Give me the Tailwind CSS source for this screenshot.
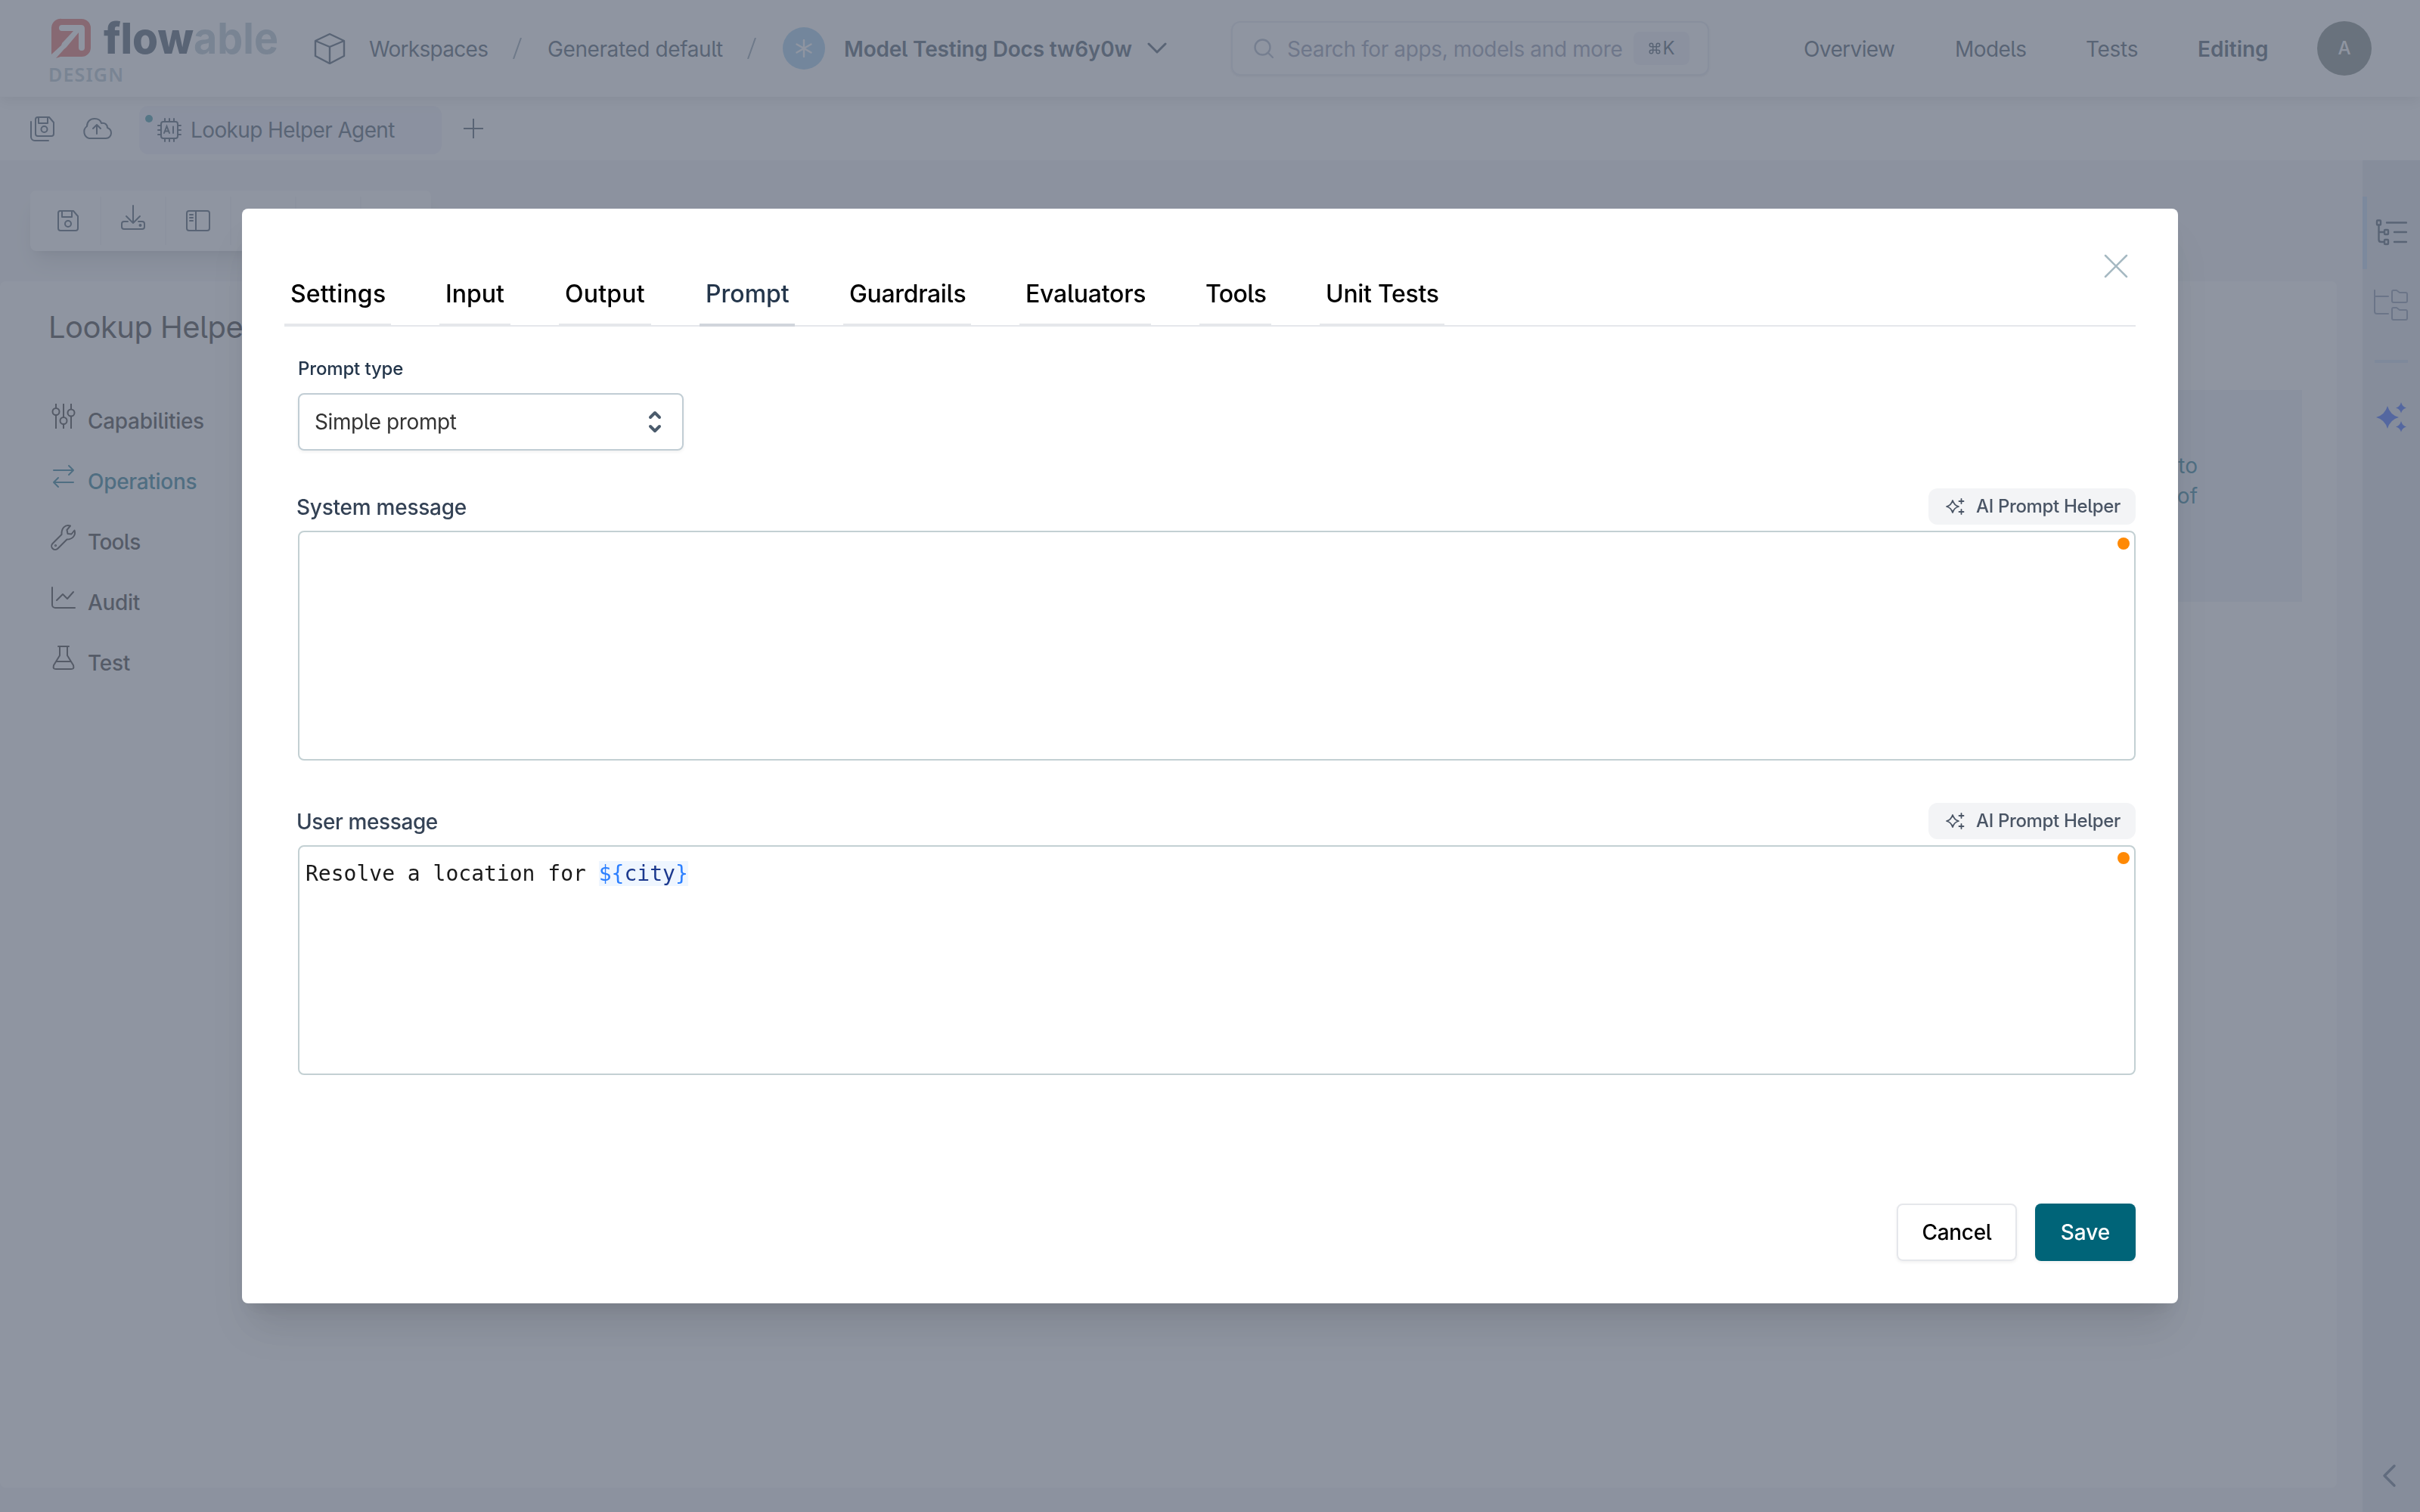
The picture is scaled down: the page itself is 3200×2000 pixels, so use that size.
<!DOCTYPE html>
<html lang="en">
<head>
    <meta charset="UTF-8">
    <meta name="viewport" content="width=device-width, initial-scale=1.0">
    <title>Flowable Design - Lookup Helper Agent</title>
    <script src="https://cdn.jsdelivr.net/npm/@tailwindcss/browser@4"></script>
</head>
<body class="w-[3200px] h-[2000px] overflow-hidden bg-gray-100 font-['Inter',sans-serif] text-[28px] leading-[40px] text-[#2a3e52] whitespace-nowrap [font-feature-settings:'cv05']">
    <div class="flex flex-col h-[2000px]">
        <!-- Top navigation -->
        <header class="relative z-10 flex items-center h-32 shrink-0 bg-white shadow-[0_6px_16px_rgba(0,0,0,0.12)] pl-[66px]">
            <svg class="w-[304px] h-[100px] mt-3 overflow-visible" viewBox="66 20 304 100">
                <path d="M82 25h26a12 12 0 0 1 12 12v26a12 12 0 0 1-12 12H80l-6 2 9-10c2-3 4-3 6-6l15-18v20q0 4 4 4t4-4V38q0-5-5-5H82q-4 0-4 4t4 4h15L84 55q-2 1-3 5L68 72V37a12 12 0 0 1 14-12z" fill="#e0514a"/>
                <text x="137" y="71" font-size="57" font-weight="800" textLength="119" lengthAdjust="spacingAndGlyphs" fill="#2a3e52" style="font-feature-settings:normal">flow</text>
                <text x="256" y="71" font-size="57" font-weight="700" textLength="112" lengthAdjust="spacingAndGlyphs" fill="#a6bac8" style="font-feature-settings:normal">able</text>
                <text x="64" y="108" font-size="25" font-weight="600" textLength="99" font-family="Noto Sans" fill="#a9bcc8">DESIGN</text>
            </svg>
            <svg class="w-[42px] h-[42px] ml-[45px]" viewBox="0 0 42 42" fill="none" stroke="currentColor" stroke-width="2.4" stroke-linejoin="round"><path d="M21 2l19 9v20l-19 10L2 31V11zM2 11l19 8 19-8M21 19v22"/></svg>
            <span class="mt-px ml-[31px] w-[156px] tracking-[-0.7px]">Workspaces</span>
            <svg class="w-3 h-7 ml-[34px]" viewBox="0 0 12 28" stroke="#7b8fa0" stroke-width="2"><path d="M11 0L1 28"/></svg>
            <span class="mt-px ml-[34px] w-[230px] tracking-[-0.4px]">Generated default</span>
            <svg class="w-3 h-7 ml-[34px]" viewBox="0 0 12 28" stroke="#7b8fa0" stroke-width="2"><path d="M11 0L1 28"/></svg>
            <span class="ml-[35px] w-14 h-14 rounded-full bg-[#8fc4ea] flex items-center justify-center">
                <svg class="w-6 h-6" viewBox="0 0 24 24" stroke="#fff" stroke-width="2.4" stroke-linecap="round"><path d="M12 1v22M2.500 6.500l19 11M2.500 17.500l19-11"/></svg>
            </span>
            <span class="mt-px ml-[25px] w-[379px] font-semibold tracking-[-0.2px]">Model Testing Docs tw6y0w</span>
            <svg class="w-[26px] h-4 ml-[22px]" viewBox="0 0 26 16" fill="none" stroke="currentColor" stroke-width="3" stroke-linecap="round" stroke-linejoin="round"><path d="M2 2l11 11L24 2"/></svg>
            <div class="ml-[85px] w-[632px] h-[72px] rounded-xl border-2 border-[#e2e5f0] shadow-sm flex items-center pl-7">
                <svg class="w-[26px] h-[26px]" viewBox="0 0 26 26" fill="none" stroke="#9aa6bb" stroke-width="2.4" stroke-linecap="round"><circle cx="11.500" cy="11.500" r="10"/><path d="M19 19l6 6"/></svg>
                <span class="mt-px ml-[18px] w-[441px] text-[#7e86a2] [font-feature-settings:normal] tracking-[-0.38px]">Search for apps, models and more</span>
                <span class="ml-[17px] w-[74px] h-11 rounded-lg bg-[#eef0f7] text-[24px] flex items-center justify-center"><svg class="w-[18px] h-[18px] mr-px" viewBox="0 0 24 24" fill="none" stroke="currentColor" stroke-width="2"><path d="M15 6v12a3 3 0 1 0 3-3H6a3 3 0 1 0 3 3V6a3 3 0 1 0-3 3h12a3 3 0 1 0-3-3"/></svg>K</span>
            </div>
            <nav class="flex items-center mt-px ml-[125px]">
                <span class="w-[200px] tracking-[-0.6px]">Overview</span>
                <span class="w-[173px] tracking-[-0.6px]">Models</span>
                <span class="w-[148px] tracking-[-0.3px]">Tests</span>
                <span class="w-[92px] font-semibold">Editing</span>
            </nav>
            <span class="ml-[66px] w-[72px] h-[72px] rounded-full bg-[#67746f] text-white text-[24px] font-medium flex items-center justify-center">A</span>
        </header>

        <!-- Open model tabs -->
        <div class="flex items-center h-[84px] shrink-0 bg-white pl-10">
            <svg class="w-8 h-[34px]" viewBox="0 0 32 34" fill="none" stroke="currentColor" stroke-width="2" stroke-linejoin="round" stroke-linecap="round"><path d="M11 2h14l6 7v15a3 3 0 0 1-3 3H10a3 3 0 0 1-3-3V5a3 3 0 0 1 3-3zM11 2v8h12V2M1 8v20a5 5 0 0 0 5 5h18"/><circle cx="18.500" cy="18" r="4"/></svg>
            <svg class="w-10 h-[30px] ml-9" viewBox="0 0 40 30" fill="none" stroke="currentColor" stroke-width="2" stroke-linecap="round" stroke-linejoin="round"><path d="M10 28a9 9 0 0 1-3-16C7 6 11 2 17 2c5 0 8 2 9 6 5-1 8 2 8 6 3 1 5 4 5 7 0 4-3 7-7 7zM20 22V10M15 15l5-5 5 5"/></svg>
            <div class="relative mt-1 ml-9 w-[400px] h-16 rounded-xl bg-[#eff0f9] flex items-center pl-6">
                <span class="absolute left-2 top-3 w-[10px] h-[10px] rounded-full bg-[#1a8595]"></span>
                <svg class="w-8 h-8" viewBox="0 0 32 32" fill="none" stroke="currentColor" stroke-width="2" stroke-linecap="round"><rect x="5" y="5" width="22" height="22" rx="3"/><path d="M10 1v4M16 1v4M22 1v4M10 27v4M16 27v4M22 27v4M1 10h4M1 16h4M1 22h4M27 10h4M27 16h4M27 22h4M9 20l3.500-9 3.500 9M10.500 17.500h4.500M21 11.500V20"/></svg>
                <span class="ml-3 w-[269px] tracking-[-0.62px]">Lookup Helper Agent</span>
            </div>
            <svg class="w-[26px] h-[26px] ml-[29px]" viewBox="0 0 26 26" stroke="currentColor" stroke-width="2"><path d="M13 0v26M0 13h26"/></svg>
        </div>

        <div class="flex flex-1 min-h-0">
            <main class="flex flex-col w-[3124px] pt-10 pb-8">
                <!-- Toolbar -->
                <div class="ml-10 w-[530px] h-20 shrink-0 rounded-lg bg-white shadow-[0_20px_30px_-6px_rgba(0,0,0,0.14),0_8px_12px_-8px_rgba(0,0,0,0.14)] flex items-center divide-x-2 divide-gray-100">
                    <div class="w-[94px] h-16 pl-[35px] flex items-center"><svg class="w-[30px] h-[30px]" viewBox="0 0 30 30" fill="none" stroke="currentColor" stroke-width="2" stroke-linejoin="round"><path d="M4 2h18l6 7v16a3 3 0 0 1-3 3H5a3 3 0 0 1-3-3V5a3 3 0 0 1 2-3zM7 2v8h13V2"/><circle cx="15" cy="19" r="4"/></svg></div>
                    <div class="w-[86px] h-16 pl-[26px] flex items-center"><svg class="w-8 h-[34px] -mt-2" viewBox="0 0 32 34" fill="none" stroke="currentColor" stroke-width="2" stroke-linecap="round" stroke-linejoin="round"><path d="M16 1v23M7 15l9 9 9-9M9 22H4a3 3 0 0 0-3 3v4a3 3 0 0 0 3 3h24a3 3 0 0 0 3-3v-4a3 3 0 0 0-3-3h-5"/><circle cx="25.500" cy="27" r="1"/></svg></div>
                    <div class="w-[86px] h-16 pl-[26px] flex items-center"><svg class="w-8 h-[30px]" viewBox="0 0 32 30" fill="none" stroke="currentColor" stroke-width="2" stroke-linecap="round"><rect x="1" y="2" width="30" height="26" rx="3"/><path d="M13 2v26M5 7h4M5 11h4M5 15h4"/></svg></div>
                    <div class="w-[86px] h-16"></div>
                    <div class="w-[86px] h-16"></div>
                    <div class="w-[86px] h-16"></div>
                </div>

                <!-- Agent editor -->
                <section class="flex justify-between mt-10 flex-1 w-[3090px] bg-white rounded-lg text-[#18181b] font-medium">
                    <div class="pl-16">
                        <h1 class="mt-[37px] text-[40px] leading-[48px] font-normal tracking-[-0.55px]">Lookup Helper Agent</h1>
                        <ul class="mt-20 flex flex-col tracking-[-0.3px]">
                            <li class="h-20 flex"><svg class="w-10 h-10 -mt-1.5 mr-3" viewBox="0 0 40 40" fill="none" stroke="currentColor" stroke-width="2"><path d="M10 3v6M10 18v18M20 3v18M20 30v6M30 3v8M30 19v17"/><circle cx="10" cy="13.500" r="4.500"/><circle cx="20" cy="25.500" r="4.500"/><circle cx="30" cy="15" r="4.500"/></svg><span>Capabilities</span></li>
                            <li class="h-20 flex text-[#006482]"><svg class="w-10 h-10 -mt-1.5 mr-3" viewBox="0 0 40 40" fill="none" stroke="currentColor" stroke-width="2" stroke-linecap="round" stroke-linejoin="round"><path d="M7 11h26M27 5l6 6-6 6M33 27H7M13 21l-6 6 6 6"/></svg><span>Operations</span></li>
                            <li class="h-20 flex"><svg class="w-10 h-10 -mt-1.5 mr-3" viewBox="0 0 40 40" fill="none" stroke="currentColor" stroke-width="2" stroke-linejoin="round"><path d="M29 4.500l-4.500 5.500 1 5 5 .5 4-5c2 6-2 12-10 12l-12 12a4.500 4.500 0 0 1-7-6.500l12-12C17 8 22 2 29 4.500z"/><circle cx="9.500" cy="30.500" r=".6"/></svg><span class="tracking-[-0.7px]">Tools</span></li>
                            <li class="h-20 flex"><svg class="w-10 h-10 -mt-1.5 mr-3" viewBox="0 0 40 40" fill="none" stroke="currentColor" stroke-width="2" stroke-linecap="round" stroke-linejoin="round"><path d="M5 6v23a4 4 0 0 0 4 4h26M11 23l8-8 6 6 8-9"/></svg><span>Audit</span></li>
                            <li class="h-20 flex"><svg class="w-10 h-10 -mt-1.5 mr-3" viewBox="0 0 40 40" fill="none" stroke="currentColor" stroke-width="2" stroke-linecap="round" stroke-linejoin="round"><path d="M13 4h14M15 4v12L7 29c-1 4 0 5 3 5h20c3 0 4-1 3-5l-8-13V4M10 24h20"/></svg><span>Test</span></li>
                        </ul>
                    </div>
                    <div class="mt-36 mr-[46px] w-[700px] h-[280px] bg-[#ebedf6] text-[#006482] font-normal text-right pt-20 pr-[138px]">
                        <p>to</p>
                        <p>of</p>
                    </div>
                </section>
            </main>

            <!-- Right rail -->
            <aside class="flex flex-col items-center w-[76px] bg-[#dbdfe8] pt-12 pb-8">
                <div class="w-full h-24 border-l-6 border-[#b4d0f0] pl-[11px] flex items-center">
                    <svg class="w-[42px] h-9" viewBox="0 0 42 36" fill="none" stroke="currentColor" stroke-width="2.400" stroke-linecap="round"><rect x="2" y="1.500" width="5" height="6" rx="1"/><rect x="12" y="14" width="5" height="6" rx="1"/><rect x="12" y="27" width="5" height="6" rx="1"/><path d="M15 4.500h26M25 17h16M25 30h16M4.500 8v19q0 3 3 3H12M4.500 17H12"/></svg>
                </div>
                <svg class="w-[46px] h-[42px] mt-[27px] text-[#72819a]" viewBox="0 0 46 42" fill="none" stroke="currentColor" stroke-width="2" stroke-linecap="round" stroke-linejoin="round"><path d="M1 1v28q0 3 3 3h15M2 9h17M24 3q0-2 2-2h4l4 3h8q2 0 2 2v9q0 2-2 2H26q-2 0-2-2zM24 26q0-2 2-2h4l4 3h8q2 0 2 2v9q0 2-2 2H26q-2 0-2-2z"/></svg>
                <div class="w-11 h-1 mt-[51px] bg-[#bdd0e6]"></div>
                <svg class="w-10 h-10 mt-[52px]" viewBox="0 0 40 40" fill="#164afa"><path d="M15 5q3.500 12 15 15-11.500 3-15 15Q11.500 23 0 20 11.500 17 15 5zM33 0q1.500 6 7 7.500-5.500 1.500-7 7-1.500-5.500-7-7Q31.500 6 33 0zM33 25q1.500 6 7 7.500-5.500 1.500-7 7-1.500-5.500-7-7Q31.500 31 33 25z"/></svg>
                <svg class="w-5 h-8 mt-auto mr-1 text-[#4a5c76]" viewBox="0 0 20 32" fill="none" stroke="currentColor" stroke-width="3.500" stroke-linecap="round" stroke-linejoin="round"><path d="M16 3L3 16l13 13"/></svg>
            </aside>
        </div>
    </div>

    <!-- Modal -->
    <div class="fixed inset-0 z-20 bg-gray-500/75 px-80 pt-[276px]">
        <div class="relative flex flex-col w-[2560px] h-[1448px] rounded-lg bg-white shadow-[0_40px_50px_-10px_rgba(0,0,0,0.1),0_16px_20px_-12px_rgba(0,0,0,0.1)] px-14">
            <svg class="absolute right-[66px] top-[60px] w-8 h-8" viewBox="0 0 32 32" stroke="#a6b9c2" stroke-width="2.500" stroke-linecap="round"><path d="M2 2l28 28M30 2L2 30"/></svg>

            <div class="mt-[84px] h-[72px] shrink-0 flex gap-16 text-[32px] leading-[57px] font-medium text-black shadow-[inset_0_-2px_0_#e5e7eb]">
                <span class="w-[141px] border-b-4 border-gray-200 pl-2 tracking-[0.2px]">Settings</span>
                <span class="w-[94px] border-b-4 border-gray-200 pl-2">Input</span>
                <span class="w-[122px] border-b-4 border-gray-200 pl-2 tracking-[0.2px]">Output</span>
                <span class="w-[126px] border-b-4 border-gray-300 pl-2 text-[#24364b]">Prompt</span>
                <span class="w-[169px] border-b-4 border-gray-200 pl-2 tracking-[-0.35px]">Guardrails</span>
                <span class="w-[174px] border-b-4 border-gray-200 pl-2 tracking-[-0.25px]">Evaluators</span>
                <span class="w-[95px] border-b-4 border-gray-200 pl-2 tracking-[-0.6px]">Tools</span>
                <span class="w-[165px] border-b-4 border-gray-200 pl-2 tracking-[-0.3px]">Unit Tests</span>
            </div>

            <div class="pl-[18px] flex flex-col">
                <label class="mt-9 text-[24px] leading-[40px] font-medium text-[#24364b] tracking-[-0.15px]">Prompt type</label>
                <div class="mt-3 w-[510px] h-[76px] rounded-lg border-2 border-[#c1cdd4] shadow-[0_2px_4px_rgba(0,0,0,0.06)] flex items-center justify-between pl-5 pr-[26px] text-[#333]">
                    <span class="tracking-[-0.4px]">Simple prompt</span>
                    <svg class="w-5 h-8" viewBox="0 0 20 32" fill="none" stroke="#4b5b6c" stroke-width="4" stroke-linecap="round" stroke-linejoin="round"><path d="M4 10l6-6 6 6M4 22l6 6 6-6"/></svg>
                </div>

                <!-- System message -->
                <div class="mt-[50px] -ml-[2px] h-12 flex items-center justify-between">
                    <label class="mt-px font-medium text-[#344255] tracking-[-0.25px]">System message</label>
                    <button class="w-[274px] h-12 rounded-xl bg-gray-100 text-[24px] font-medium text-[#4a5565] flex items-center pl-[22px]">
                        <svg class="w-[26px] h-[22px] mr-[15px]" viewBox="0 0 26 22" fill="none" stroke="currentColor" stroke-width="1.800" stroke-linecap="round" stroke-linejoin="round"><path d="M10 3q2 6.500 8 8-6 1.500-8 8-2-6.500-8-8 6-1.500 8-8zM21.500 1v6M18.500 4h6M21.500 15v6M18.500 18h6"/></svg>
                        <span class="tracking-[-0.35px]">AI Prompt Helper</span>
                    </button>
                </div>
                <div class="relative mt-2 h-[304px] rounded-lg border-2 border-[#c3d0d3]">
                    <span class="absolute right-[6px] top-[7px] w-4 h-4 rounded-full bg-orange-400"></span>
                </div>

                <!-- User message -->
                <div class="mt-14 -ml-[2px] h-12 flex items-center justify-between">
                    <label class="mt-px font-medium text-[#344255] tracking-[-0.4px]">User message</label>
                    <button class="w-[274px] h-12 rounded-xl bg-gray-100 text-[24px] font-medium text-[#4a5565] flex items-center pl-[22px]">
                        <svg class="w-[26px] h-[22px] mr-[15px]" viewBox="0 0 26 22" fill="none" stroke="currentColor" stroke-width="1.800" stroke-linecap="round" stroke-linejoin="round"><path d="M10 3q2 6.500 8 8-6 1.500-8 8-2-6.500-8-8 6-1.500 8-8zM21.500 1v6M18.500 4h6M21.500 15v6M18.500 18h6"/></svg>
                        <span class="tracking-[-0.35px]">AI Prompt Helper</span>
                    </button>
                </div>
                <div class="relative mt-2 h-[304px] rounded-lg border-2 border-[#c3d0d3] pt-4 pl-2 font-['DejaVu_Sans_Mono',monospace] text-[#1a1a1a]">
                    <span>Resolve a location for <span class="bg-blue-50 text-blue-900"><span class="text-blue-500">${</span>city<span class="text-blue-500">}</span></span></span>
                    <span class="absolute right-[6px] top-[7px] w-4 h-4 rounded-full bg-orange-400"></span>
                </div>
            </div>

            <div class="mt-auto mb-14 flex justify-end gap-6 font-medium">
                <button class="w-[159px] h-[76px] rounded-lg border-2 border-gray-200 shadow-[0_2px_4px_rgba(0,0,0,0.06)] text-black tracking-[-0.3px]">Cancel</button>
                <button class="w-[133px] h-[76px] rounded-lg bg-[#006478] shadow-[0_2px_4px_rgba(0,0,0,0.06)] text-white">Save</button>
            </div>
        </div>
    </div>
</body>
</html>
